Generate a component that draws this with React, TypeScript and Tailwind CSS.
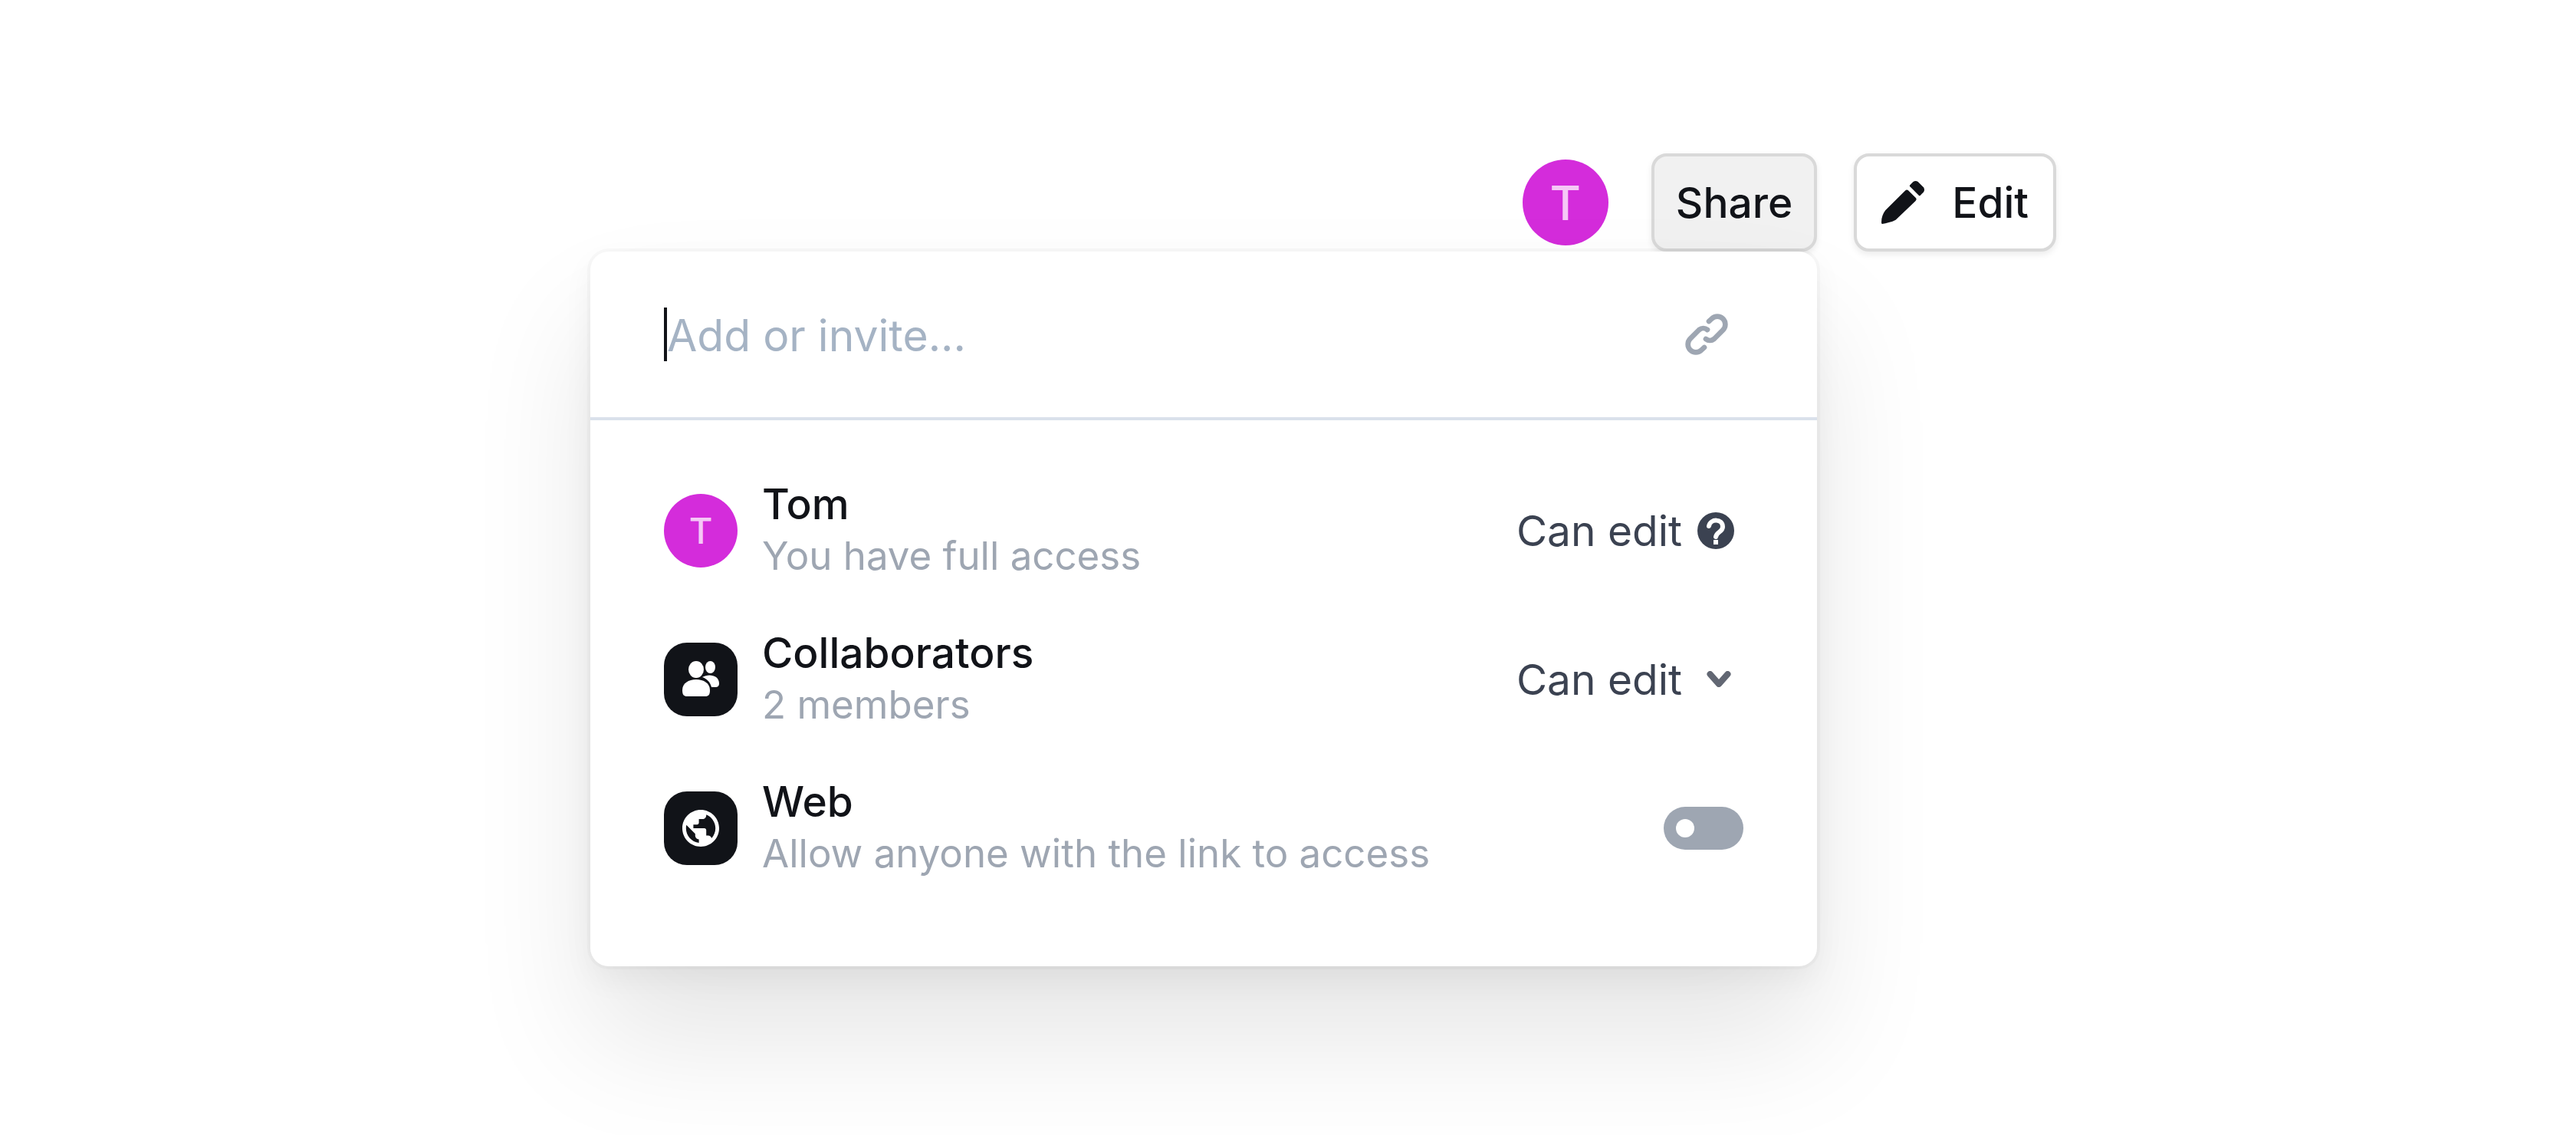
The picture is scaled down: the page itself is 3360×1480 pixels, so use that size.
import { useState, type ReactNode } from "react";

function PencilIcon() {
  return (
    <svg viewBox="0 0 54 54" className="size-14 shrink-0" fill="currentColor" aria-hidden="true">
      <path d="M1 54 Q0 54 0 52 C0 46 2 41 5 37 L30 12 Q32 10 34 12 L43 21 Q45 23 43 25 L18 49 C13 52 6 53 1 54Z" />
      <path d="M36 7 Q35 6 36 5 L40 1 Q43 -1 46 1 L53 8 Q55 11 53 14 L49 18 Q48 19 47 18Z" />
    </svg>
  );
}

function LinkIcon() {
  return (
    <svg
      viewBox="54 53 168 168"
      className="size-14"
      fill="none"
      stroke="currentColor"
      strokeWidth="20"
      strokeLinecap="round"
      aria-hidden="true"
    >
      <path d="M147 86 L158 76 A31 31 0 0 1 202 120 L167 155 A26 26 0 0 1 135 155" />
      <path d="M129 188 L118 198 A31 31 0 0 1 74 154 L109 119 A26 26 0 0 1 141 119" />
    </svg>
  );
}

function QuestionIcon() {
  return (
    <svg viewBox="0 0 48 48" className="size-12 shrink-0" fill="none" aria-hidden="true">
      <circle cx="24" cy="24" r="24" fill="currentColor" />
      <path
        d="M15 18 C17 8 33 8 33 19 C33 26 25 25 24 32"
        stroke="#fff"
        strokeWidth="6"
        strokeLinecap="round"
      />
      <path d="M21 36 H27 V42 H21Z" fill="#fff" />
    </svg>
  );
}

function PeopleIcon() {
  return (
    <svg viewBox="0 0 48 48" className="size-12" fill="currentColor" aria-hidden="true">
      <ellipse cx="18" cy="11" rx="10" ry="11" />
      <ellipse cx="36.5" cy="8" rx="6.500" ry="8" />
      <path d="M0 38 C0 29 8 24 18 24 C28 24 36 29 36 38 C36 44 34 46 30 46 H6 C2 46 0 44 0 38Z" />
      <path d="M26 21 C34 16 48 18 48 29 C48 33 46 34 43 34 H38 C36 27 32 23 26 21Z" />
    </svg>
  );
}

function GlobeIcon() {
  return (
    <svg viewBox="2 2 20 20" className="size-12" fill="currentColor" aria-hidden="true">
      <path d="M12 2C6.48 2 2 6.48 2 12s4.480 10 10 10 10-4.480 10-10S17.520 2 12 2zm-1 17.930c-3.950-.490-7-3.850-7-7.930 0-.620.080-1.210.210-1.790L9 15v1c0 1.100.900 2 2 2v1.930zm6.900-2.540c-.260-.810-1-1.390-1.900-1.390h-1v-3c0-.550-.450-1-1-1H8v-2h2c.550 0 1-.450 1-1V7h2c1.100 0 2-.900 2-2v-.410c2.930 1.190 5 4.060 5 7.410 0 2.080-.800 3.970-2.100 5.390z" />
    </svg>
  );
}

function ChevronIcon() {
  return (
    <svg
      viewBox="0 0 32 24"
      className="h-6 w-8 shrink-0 opacity-80"
      fill="none"
      stroke="currentColor"
      strokeWidth="8"
      strokeLinecap="round"
      strokeLinejoin="round"
      aria-hidden="true"
    >
      <path d="M4.500 5 L16 18 L27.500 5" />
    </svg>
  );
}

function Tile({ children }: { children: ReactNode }) {
  return (
    <span className="flex size-24 shrink-0 items-center justify-center rounded-[30px] bg-[#111318] text-white">
      {children}
    </span>
  );
}

function Row({
  icon,
  title,
  detail,
  children,
}: {
  icon: ReactNode;
  title: string;
  detail: string;
  children: ReactNode;
}) {
  return (
    <li className="flex h-[138px] items-center justify-between">
      <div className="flex items-center gap-8">
        {icon}
        <div className="flex flex-col pb-1">
          <span className="text-[55px]/[70px] font-medium text-[#111318]">{title}</span>
          <span className="text-[51px]/[66px] text-[#9ea6b2]">{detail}</span>
        </div>
      </div>
      {children}
    </li>
  );
}

export default function App() {
  const [webAccess, setWebAccess] = useState(false);

  return (
    <main className="flex min-h-screen flex-col bg-white px-[678px] pt-[200px] font-[Inter,sans-serif]">
      <div className="relative flex items-center justify-end">
        <span className="mr-14 flex size-28 items-center justify-center rounded-full bg-[#d42cdb] text-[62px] font-medium text-[#f5c8f6]">
          T
        </span>
        <button className="mr-12 h-32 rounded-[20px] border-4 border-[#d9d9d9] bg-[#f1f1f1] px-7 text-[55px] font-medium text-[#111318] shadow-[0_4px_8px_rgba(0,0,0,0.08)]">
          Share
        </button>
        <button className="flex h-32 items-center gap-9 rounded-[20px] border-4 border-[#d9d9d9] bg-white px-8 text-[55px] font-medium text-[#111318] shadow-[0_4px_8px_rgba(0,0,0,0.08)]">
          <PencilIcon />
          Edit
        </button>
      </div>

      <section
        aria-label="Share"
        className="relative mr-[312px] w-[1600px] self-end rounded-3xl bg-white shadow-[0_0_0_4px_rgba(0,0,0,0.025),0_16px_40px_rgba(0,0,0,0.05),0_96px_160px_rgba(0,0,0,0.1)]"
      >
        <div className="flex h-[220px] items-center border-b-4 border-[#dae1eb] pr-[116px] pl-24">
          <span className="h-[70px] w-1 bg-[#111318]" aria-hidden="true" />
          <input
            aria-label="Add or invite"
            type="text"
            placeholder="Add or invite..."
            className="min-w-0 flex-1 bg-transparent pt-1 text-[57px]/[80px] text-[#111318] outline-none placeholder:text-[#a5b3c4]"
          />
          <button aria-label="Copy link" className="text-[#9ea6b2]">
            <LinkIcon />
          </button>
        </div>

        <ul className="flex flex-col gap-14 px-24 pt-[75px] pb-[111px]">
          <Row
            icon={
              <span className="flex size-24 shrink-0 items-center justify-center rounded-full bg-[#d42cdb] text-[47px] font-medium text-[#f5c8f6]">
                T
              </span>
            }
            title="Tom"
            detail="You have full access"
          >
            <button className="mr-3 flex items-center gap-5 text-[55px] text-[#3b4251]">
              Can edit
              <QuestionIcon />
            </button>
          </Row>
          <Row
            icon={
              <Tile>
                <PeopleIcon />
              </Tile>
            }
            title="Collaborators"
            detail="2 members"
          >
            <button className="mr-4 flex items-center gap-8 text-[55px] text-[#3b4251]">
              Can edit
              <ChevronIcon />
            </button>
          </Row>
          <Row
            icon={
              <Tile>
                <GlobeIcon />
              </Tile>
            }
            title="Web"
            detail="Allow anyone with the link to access"
          >
            <button
              role="switch"
              aria-checked={webAccess}
              aria-label="Web access"
              onClick={() => setWebAccess(!webAccess)}
              className="flex h-14 w-[104px] items-center rounded-full bg-[#9ea6b2] px-4 aria-checked:justify-end"
            >
              <span className="size-6 rounded-full bg-white" />
            </button>
          </Row>
        </ul>
      </section>
    </main>
  );
}
